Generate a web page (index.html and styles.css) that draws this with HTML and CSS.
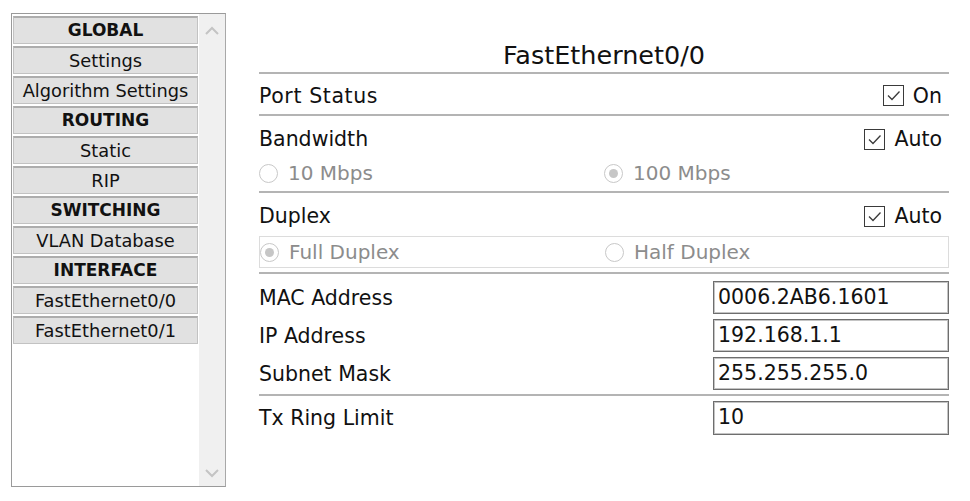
FILE: index.html
```html
<!DOCTYPE html>
<html>
<head>
<meta charset="utf-8">
<link rel="stylesheet" href="styles.css">
</head>
<body>
<div class="page">
  <aside class="sidebar">
    <div class="list">
      <div class="item head">GLOBAL</div>
      <div class="item">Settings</div>
      <div class="item">Algorithm Settings</div>
      <div class="item head">ROUTING</div>
      <div class="item">Static</div>
      <div class="item">RIP</div>
      <div class="item head">SWITCHING</div>
      <div class="item">VLAN Database</div>
      <div class="item head">INTERFACE</div>
      <div class="item">FastEthernet0/0</div>
      <div class="item">FastEthernet0/1</div>
    </div>
    <div class="scrollbar">
      <svg class="arrow" width="14" height="10" viewBox="0 0 14 10"><path d="M1 8 L7 2 L13 8" fill="none" stroke="#c4c4c4" stroke-width="2"/></svg>
      <svg class="arrow" width="14" height="10" viewBox="0 0 14 10"><path d="M1 2 L7 8 L13 2" fill="none" stroke="#c4c4c4" stroke-width="2"/></svg>
    </div>
  </aside>

  <main class="main">
    <h1 class="title">FastEthernet0/0</h1>

    <section class="sec sec-port">
      <div class="row">
        <span class="label wide">Port Status</span>
        <span class="check"><span class="box"><svg width="17" height="17" viewBox="0 0 17 17"><path d="M3 8.5 L7 12.5 L14.5 4.5" fill="none" stroke="#3a3a3a" stroke-width="1.3"/></svg></span>On</span>
      </div>
    </section>

    <section class="sec sec-bw">
      <div class="row">
        <span class="label">Bandwidth</span>
        <span class="check"><span class="box"><svg width="17" height="17" viewBox="0 0 17 17"><path d="M3 8.5 L7 12.5 L14.5 4.5" fill="none" stroke="#3a3a3a" stroke-width="1.3"/></svg></span>Auto</span>
      </div>
      <div class="radios">
        <span class="radio"><span class="dot"></span>10 Mbps</span>
        <span class="radio"><span class="dot on"></span>100 Mbps</span>
      </div>
    </section>

    <section class="sec sec-dup">
      <div class="row">
        <span class="label">Duplex</span>
        <span class="check"><span class="box"><svg width="17" height="17" viewBox="0 0 17 17"><path d="M3 8.5 L7 12.5 L14.5 4.5" fill="none" stroke="#3a3a3a" stroke-width="1.3"/></svg></span>Auto</span>
      </div>
      <div class="radios boxed">
        <span class="radio"><span class="dot on"></span>Full Duplex</span>
        <span class="radio"><span class="dot"></span>Half Duplex</span>
      </div>
    </section>

    <section class="sec sec-fields">
      <div class="field"><span class="label">MAC Address</span><span class="input">0006.2AB6.1601</span></div>
      <div class="field"><span class="label">IP Address</span><span class="input">192.168.1.1</span></div>
      <div class="field"><span class="label">Subnet Mask</span><span class="input">255.255.255.0</span></div>
    </section>

    <section class="sec sec-tx">
      <div class="field"><span class="label">Tx Ring Limit</span><span class="input">10</span></div>
    </section>
  </main>
</div>
</body>
</html>
```

FILE: styles.css
```css
* { box-sizing: border-box; }
html, body { margin: 0; padding: 0; background: #fff; }
body {
  font-family: "DejaVu Sans", Verdana, sans-serif;
  color: #111;
}
.page {
  display: flex;
  align-items: flex-start;
  padding: 13px 0 0 11px;
}
.sidebar {
  width: 215px;
  height: 474px;
  border: 1px solid #9a9a9a;
  border-right-color: #a8a8a8;
  display: flex;
  background: #fff;
}
.list {
  width: 186px;
  padding: 2px 0 0 1px;
  display: flex;
  flex-direction: column;
  gap: 2px;
}
.item {
  height: 28px;
  background: #e1e1e1;
  border: 1px solid #c2c2c2;
  border-top: 2px solid #adadad;
  font-size: 17.8px;
  line-height: 25px;
  text-align: center;
  color: #111;
  white-space: nowrap;
}
.item.head { font-weight: bold; font-size: 17px; }
.scrollbar {
  flex: 1;
  margin-left: 1px;
  background: #f0f0f0;
  display: flex;
  flex-direction: column;
  justify-content: space-between;
  align-items: center;
  padding: 12px 0 8px;
}
.main {
  margin-left: 33px;
  width: 690px;
}
.title {
  margin: 26px 0 0;
  font-weight: normal;
  font-size: 25.5px;
  line-height: 32px;
  text-align: center;
  color: #111;
  height: 33px;
}
.sec {
  border-top: 2px solid #b4b4b4;
}
.sec-port { height: 42px; }
.sec-bw { height: 77px; }
.sec-dup { height: 81px; }
.sec-fields { height: 122px; padding-top: 7px; }
.sec-tx { padding-top: 5px; }
.row {
  display: flex;
  justify-content: space-between;
  align-items: center;
  font-size: 20.5px;
  height: 42px;
  padding-right: 7px;
}
.sec-port .row { padding-top: 3px; height: 40px; }
.label.wide { letter-spacing: 0.6px; }
.sec-bw .row, .sec-dup .row { height: 44px; padding-top: 2px; }
.check {
  display: flex;
  align-items: center;
  gap: 9px;
}
.box {
  width: 21px;
  height: 21px;
  border: 1px solid #3a3a3a;
  background: #fff;
  display: flex;
  align-items: center;
  justify-content: center;
}
.radios {
  display: grid;
  grid-template-columns: 345px 1fr;
  font-size: 20px;
  color: #8c8c8c;
  height: 26px;
  align-items: center;
}
.radios.boxed {
  border: 1px solid #dcdcdc;
  height: 32px;
  margin-top: -1px;
}
.radio {
  display: flex;
  align-items: center;
  gap: 10px;
}
.dot {
  width: 19px;
  height: 19px;
  border-radius: 50%;
  border: 1px solid #c8c8c8;
  background: #fff;
  position: relative;
}
.dot.on::after {
  content: "";
  position: absolute;
  left: 4px; top: 4px;
  width: 9px; height: 9px;
  border-radius: 50%;
  background: #c6c6c6;
}
.field {
  display: flex;
  justify-content: space-between;
  align-items: center;
  font-size: 20.5px;
  height: 33px;
  margin-bottom: 5px;
}
.sec-tx .field { height: 34px; }
.sec-tx .input { height: 34px; }
.input {
  width: 236px;
  height: 33px;
  border: 1px solid #6e6e6e;
  box-shadow: inset 0 0 0 1px #c4c4c4;
  padding: 0 0 0 4px;
  line-height: 31px;
  color: #111;
}
```
